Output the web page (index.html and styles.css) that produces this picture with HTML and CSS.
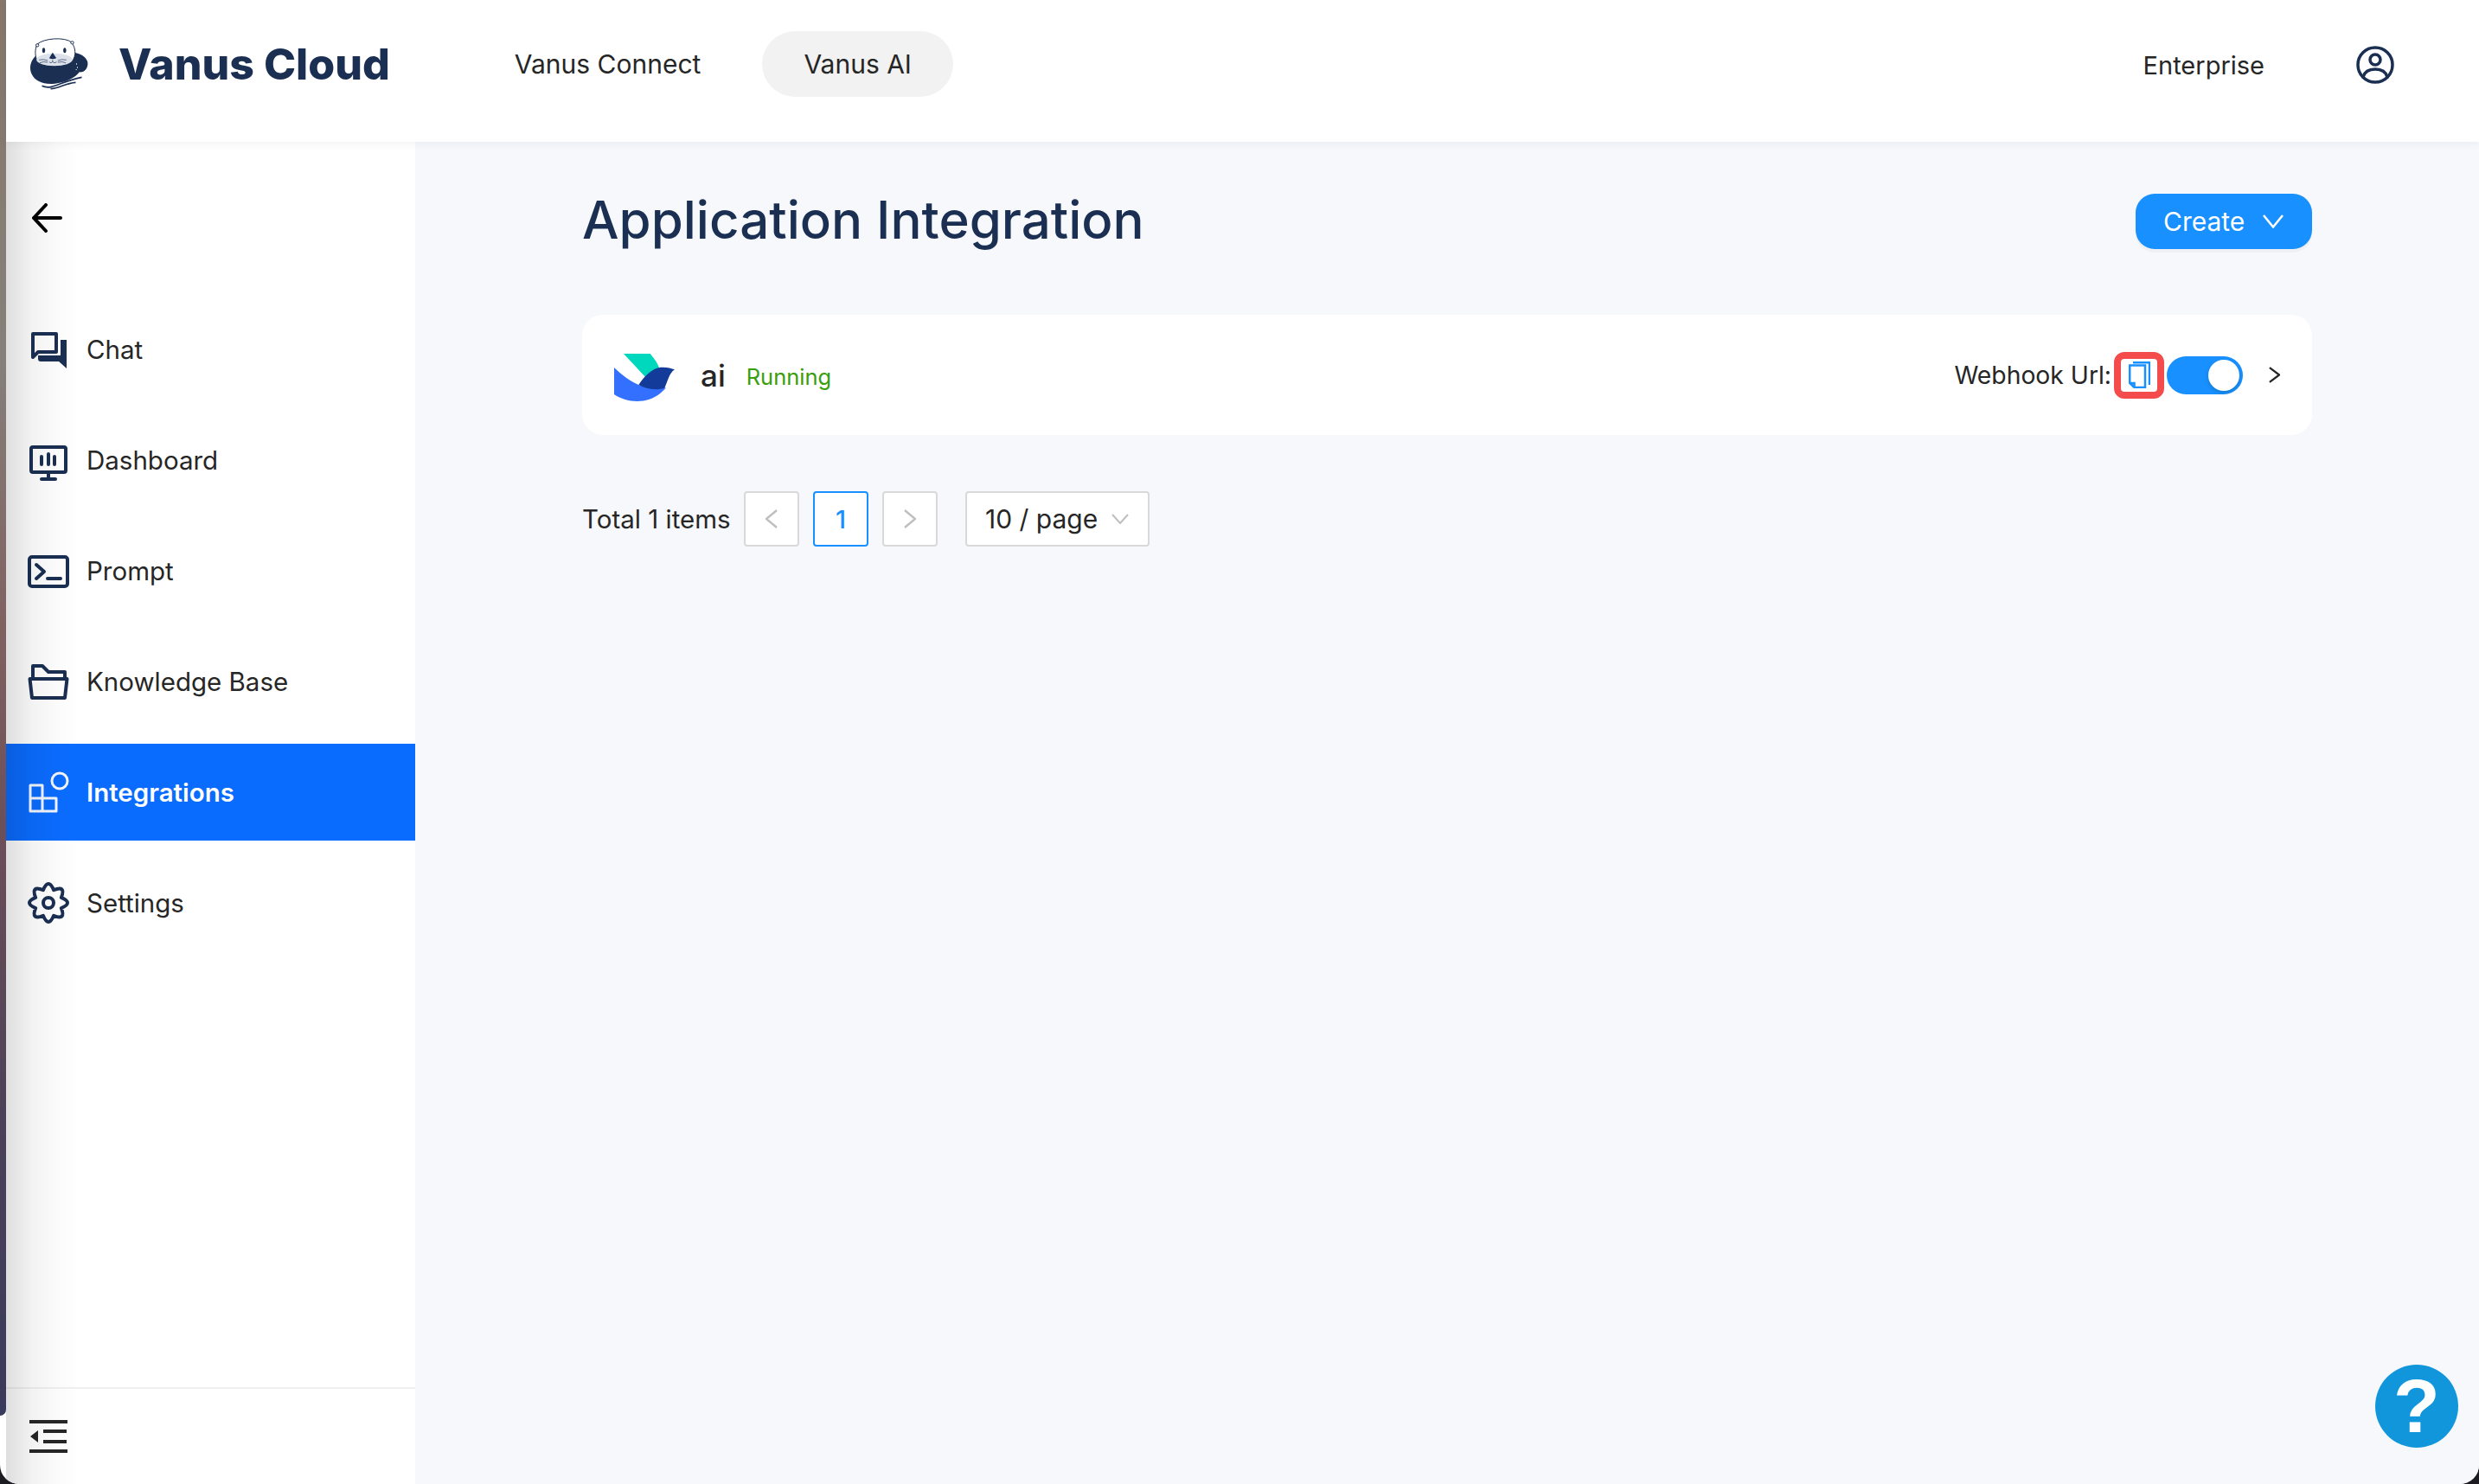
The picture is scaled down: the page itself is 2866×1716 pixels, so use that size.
FILE: index.html
```html
<!DOCTYPE html>
<html lang="en">
<head>
    <meta charset="UTF-8">
    <title>Vanus Cloud</title>
    <link rel="stylesheet" href="styles.css">
</head>
<body>
<div class="window">
    <div class="strip"></div>
    <div class="app">
        <header class="topbar">
            <svg class="otter" viewBox="105 70 200 180">
                <path class="navy" d="M125 130C103 150 100 178 110 196C122 220 150 232 190 228C225 226 262 207 275 188C295 190 307 170 303 152C298 135 280 125 258 120Z"/>
                <path class="otter-face" d="M128 92C150 70 225 65 248 85C262 105 265 130 250 150C225 170 150 172 130 150C120 135 120 110 128 92Z"/>
                <circle class="otter-face" cx="129" cy="95" r="5"/>
                <circle class="otter-face" cx="250" cy="86" r="5"/>
                <ellipse class="otter-muzzle" cx="188" cy="145" rx="62" ry="22"/>
                <ellipse class="navy" cx="151" cy="113" rx="5" ry="9"/>
                <ellipse class="navy" cx="224" cy="113" rx="5" ry="9"/>
                <path class="navy" d="M182 120L195 140Q182 146 170 140Z"/>
                <path class="otter-line" d="M182 146V152M135 146Q150 142 165 148M137 156Q150 150 165 154M230 146Q215 142 200 148M228 156Q215 150 200 154M170 153Q177 160 182 152Q188 160 196 153"/>
                <path class="otter-line white" d="M265 158v4M268 170v4M264 178v3"/>
                <path class="otter-wave" d="M145 236C180 252 205 222 283 206M175 246C205 246 225 226 262 224"/>
            </svg>
            <span class="brand">Vanus Cloud</span>
            <nav class="topnav">
                <a class="topnav-item">Vanus Connect</a>
                <a class="topnav-item on">Vanus AI</a>
            </nav>
            <a class="enterprise">Enterprise</a>
            <svg class="user" viewBox="0 0 44 44">
                <circle class="ico thin" cx="22" cy="22" r="20"/>
                <circle class="ico thin" cx="22" cy="16" r="6"/>
                <path class="ico thin" d="M8 36C10 29 15 27 22 27S34 29 36 36"/>
            </svg>
        </header>
        <div class="body">
            <aside class="side">
                <div class="back">
                    <svg class="back-arrow" viewBox="0 0 36 34"><path d="M34 17H3M17 2L3 17L17 32"/></svg>
                </div>
                <ul class="menu">
                    <li class="menu-item">
                        <svg class="icon" viewBox="0 0 48 48">
                            <path class="ico" d="M6 33V6H33V27H12Z"/>
                            <path class="navy" d="M38 13H45V46L36 38H15A3 3 0 0 1 12 35V31H38Z"/>
                        </svg>
                        <span>Chat</span>
                    </li>
                    <li class="menu-item">
                        <svg class="icon" viewBox="0 0 48 48">
                            <rect class="ico" x="4" y="9" width="40" height="29" rx="2"/>
                            <path class="ico" d="M24 38V46M16 46H32M16 20V29M24 17V29M31 20V29"/>
                        </svg>
                        <span>Dashboard</span>
                    </li>
                    <li class="menu-item">
                        <svg class="icon" viewBox="0 0 48 48">
                            <rect class="ico" x="2" y="8" width="44" height="34" rx="3"/>
                            <path class="ico" d="M10 17L19 25L10 33M23 33H38"/>
                        </svg>
                        <span>Prompt</span>
                    </li>
                    <li class="menu-item">
                        <svg class="icon" viewBox="0 0 48 48">
                            <path class="ico" d="M2.500 21H45.500L43 43H5Z"/>
                            <path class="ico" d="M6 21V6H17L24 13H43V21"/>
                        </svg>
                        <span>Knowledge Base</span>
                    </li>
                    <li class="menu-item active">
                        <svg class="icon" viewBox="0 0 48 48">
                            <circle class="ico-w" cx="37" cy="11" r="9"/>
                            <path class="ico-w" d="M3 16H17V46H3ZM3 31H33V46H17"/>
                        </svg>
                        <span>Integrations</span>
                    </li>
                    <li class="menu-item">
                        <svg class="icon" viewBox="0 0 48 48">
                            <path class="ico" d="M38.800 17.900Q53.200 24 38.800 30.100Q44.600 44.600 30.100 38.800Q24 53.200 17.900 38.800Q3.400 44.600 9.200 30.100Q-5.200 24 9.200 17.900Q3.400 3.400 17.900 9.200Q24 -5.200 30.100 9.200Q44.600 3.400 38.800 17.900Z"/>
                            <circle class="ico" cx="24" cy="24" r="6"/>
                        </svg>
                        <span>Settings</span>
                    </li>
                </ul>
                <div class="side-foot">
                    <svg class="fold" viewBox="0 0 44 38">
                        <path class="dark" d="M0 0H44V4H0ZM16 11H43V15H16ZM16 23H43V27H16ZM0 34H44V38H0ZM10 12V26L1 19Z"/>
                    </svg>
                </div>
            </aside>
            <main class="main">
                <div class="head-row">
                    <h1 class="title">Application Integration</h1>
                    <button class="create">Create
                        <svg class="create-arrow" viewBox="0 0 24 16"><path d="M1 1L12 14.500L23 1"/></svg>
                    </button>
                </div>
                <section class="card">
                    <svg class="bird" viewBox="150 177 210 165">
                        <path class="bird-teal" d="M183 177H275C290 195 302 212 308 230L262 262Z"/>
                        <path class="bird-blue" d="M150 225C175 250 205 272 235 285C265 298 300 300 330 295C300 330 265 342 230 342C200 342 170 332 150 318Z"/>
                        <path class="bird-dark" d="M235 285C255 255 285 222 320 224C335 224 350 228 360 232C340 245 335 275 325 296C295 305 260 300 235 285Z"/>
                    </svg>
                    <span class="app-name">ai</span>
                    <span class="status">Running</span>
                    <span class="webhook">Webhook Url:</span>
                    <span class="copy-box">
                        <svg class="copy" viewBox="0 0 25 31">
                            <path d="M1.200 4.500H19V30H6.500L1.200 25ZM1.200 25H6.500V30"/>
                            <path d="M5 1.200H24V27"/>
                        </svg>
                    </span>
                    <span class="switch"><i class="knob"></i></span>
                    <svg class="more" viewBox="0 0 14 20"><path d="M1 1L13 10L1 19"/></svg>
                </section>
                <div class="pager">
                    <span class="total">Total 1 items</span>
                    <span class="page">
                        <svg class="page-arrow" viewBox="0 0 14 22"><path d="M13 1L1 11L13 21"/></svg>
                    </span>
                    <span class="page current">1</span>
                    <span class="page">
                        <svg class="page-arrow" viewBox="0 0 14 22"><path d="M1 1L13 11L1 21"/></svg>
                    </span>
                    <span class="size">10 / page
                        <svg class="size-arrow" viewBox="0 0 20 12"><path d="M1 1L10 11L19 1"/></svg>
                    </span>
                </div>
            </main>
        </div>
    </div>
    <div class="edge-shade"></div>
    <div class="help">?</div>
</div>
</body>
</html>
```

FILE: styles.css
```css
*{
    margin: 0;padding: 0;
    box-sizing: border-box;
}
html,body{
    height: 100%;
    overflow: hidden;
    background: #1c1c22;
}
ul,li{list-style: none}
body{
    font-family: Inter, "Noto Sans", sans-serif;
    font-size: 29px;
    color: #262626;
}
.window{
    position: relative;
    display: flex;
    height: 1716px;
    background: #fff;
    border-radius: 0 0 22px 22px;
    overflow: hidden;
}
.strip{
    flex: none;
    width: 7px;
    height: 1637px;
    border-radius: 0 0 7px 0;
    background: linear-gradient(#87776a 0,#85807a 25%,#80605f 45%,#6a4d58 60%,#4a4058 80%,#3a3a5c 100%);
}
.app{
    flex: 1;
    display: flex;
    flex-direction: column;
    min-width: 0;
}
/* soft shadow of the neighbouring window */
.edge-shade{
    position: absolute;
    left: 7px;
    top: 0;
    bottom: 0;
    width: 85px;
    background: linear-gradient(90deg,rgba(0,0,0,.13),rgba(0,0,0,.05) 35%,rgba(0,0,0,.015) 70%,rgba(0,0,0,0));
    pointer-events: none;
}

.topbar{
    flex: none;
    position: relative;
    z-index: 2;
    display: flex;
    align-items: center;
    height: 164px;
    padding: 0 98px 16px 28px;
    background: #fff;
    box-shadow: 0 2px 10px rgba(20,30,60,.06);
}
.otter{
    width: 67px;
    height: 60px;
}
.navy{fill: #1a2f52}
.dark{fill: #262626}
.otter-face{
    fill: #fff;
    stroke: #1a2f52;
    stroke-width: 3;
}
.otter-muzzle{fill: #dde2ea}
.otter-line{
    fill: none;
    stroke: #1a2f52;
    stroke-width: 2;
}
.otter-line.white{stroke: #fff;stroke-width: 3}
.otter-wave{
    fill: none;
    stroke: #1a2f52;
    stroke-width: 5;
}
.brand{
    margin-left: 35px;
    font-size: 50px;
    font-weight: 800;
    color: #1a2f52;
}
.topnav{
    display: flex;
    align-items: center;
    gap: 23px;
    margin-left: 96px;
    font-size: 30px;
}
.topnav-item{
    height: 76px;
    line-height: 76px;
    padding: 0 48px;
    border-radius: 38px;
}
.topnav-item.on{background: #f2f2f2}
.enterprise{
    margin-left: auto;
    margin-top: 2px;
}
.user{
    width: 44px;
    height: 44px;
    margin-top: 2px;
    margin-left: 106px;
}
.ico{
    fill: none;
    stroke: #1a2f52;
    stroke-width: 4;
    stroke-linecap: round;
    stroke-linejoin: round;
}
.ico.thin{stroke-width: 3.500}
.ico-w{
    fill: none;
    stroke: #f2f5fa;
    stroke-width: 3;
    stroke-linejoin: round;
}

.body{
    flex: 1;
    display: flex;
    min-height: 0;
}
.side{
    flex: none;
    display: flex;
    flex-direction: column;
    width: 473px;
    background: #fff;
}
.back{
    display: flex;
    align-items: center;
    height: 176px;
    margin-bottom: 8px;
    padding-left: 29px;
}
.back-arrow{width: 36px;height: 34px}
.back-arrow path{
    fill: none;
    stroke: #000;
    stroke-width: 4;
    stroke-linecap: round;
    stroke-linejoin: round;
}
.menu{
    display: flex;
    flex-direction: column;
    gap: 16px;
}
.menu-item{
    display: flex;
    align-items: center;
    gap: 20px;
    height: 112px;
    padding-left: 25px;
    font-size: 29.500px;
}
.icon{
    flex: none;
    width: 48px;
    height: 48px;
    overflow: visible;
}
.menu-item.active{
    background: #0a6cff;
    color: #fff;
    font-weight: 600;
}
.side-foot{
    display: flex;
    align-items: center;
    height: 112px;
    margin-top: auto;
    padding-left: 27px;
    border-top: 2px solid #f0f0f0;
}
.fold{width: 44px;height: 38px}

.main{
    flex: 1;
    min-width: 0;
    padding: 60px 193px 0 193px;
    background: #f7f8fc;
}
.head-row{
    display: flex;
    align-items: center;
    justify-content: space-between;
    height: 64px;
}
.title{
    padding-bottom: 4px;
    font-size: 60px;
    font-weight: 500;
    color: #1a2f52;
}
.create{
    display: flex;
    align-items: center;
    gap: 21px;
    width: 204px;
    height: 64px;
    padding-left: 32px;
    border: 0;
    border-radius: 22px;
    background: #1890ff;
    color: #fff;
    font: inherit;
    font-size: 30px;
    box-shadow: 0 4px 0 rgba(0,0,0,.03);
}
.create-arrow{width: 24px;height: 16px}
.create-arrow path{
    fill: none;
    stroke: #fff;
    stroke-width: 2.500;
}
.card{
    display: flex;
    align-items: center;
    height: 139px;
    margin-top: 76px;
    padding: 0 36px 0 37px;
    background: #fff;
    border-radius: 24px;
}
.bird{
    width: 70px;
    height: 55px;
    margin-top: 6px;
}
.bird-teal{fill: #00d8bd}
.bird-blue{fill: #3370ff}
.bird-dark{fill: #133c9a}
.app-name{
    margin-left: 30px;
    font-size: 35px;
    font-weight: 500;
}
.status{
    margin-left: 24px;
    padding-top: 4px;
    font-size: 25.500px;
    color: #389e0d;
}
.webhook{
    margin-left: auto;
    font-size: 28.300px;
}
.copy-box{
    display: flex;
    align-items: center;
    justify-content: center;
    width: 58px;
    height: 54px;
    margin-left: 3px;
    border: 8px solid #f44c4c;
    border-radius: 12px;
}
.copy{
    flex: none;
    width: 25px;
    height: 31px;
}
.copy path{
    fill: none;
    stroke: #1890ff;
    stroke-width: 2.500;
}
.switch{
    display: flex;
    align-items: center;
    justify-content: flex-end;
    width: 88px;
    height: 44px;
    margin-left: 3px;
    padding-right: 4px;
    background: #1890ff;
    border-radius: 22px;
}
.knob{
    width: 36px;
    height: 36px;
    border-radius: 50%;
    background: #fff;
    box-shadow: 0 2px 4px rgba(0,35,11,.2);
}
.more{
    width: 13px;
    height: 19px;
    margin-left: 30px;
    margin-right: 1px;
}
.more path{
    fill: none;
    stroke: #262626;
    stroke-width: 2.500;
}
.pager{
    display: flex;
    align-items: center;
    height: 64px;
    margin-top: 65px;
}
.total{
    width: 187px;
    white-space: nowrap;
    font-size: 29.500px;
}
.page{
    display: flex;
    align-items: center;
    justify-content: center;
    width: 64px;
    height: 64px;
    margin-right: 16px;
    background: #fff;
    border: 2px solid #d9d9d9;
    border-radius: 4px;
}
.page.current{
    border-color: #1890ff;
    color: #1890ff;
    font-weight: 500;
}
.page-arrow{width: 14px;height: 22px}
.page-arrow path{
    fill: none;
    stroke: #bfbfbf;
    stroke-width: 2.500;
}
.size{
    display: flex;
    align-items: center;
    justify-content: space-between;
    width: 213px;
    height: 64px;
    margin-left: 16px;
    padding: 0 22px 0 21px;
    background: #fff;
    border: 2px solid #d9d9d9;
    border-radius: 4px;
    font-size: 30px;
}
.size-arrow{width: 20px;height: 12px}
.size-arrow path{
    fill: none;
    stroke: #bfbfbf;
    stroke-width: 2;
}
.help{
    position: absolute;
    right: 24px;
    bottom: 42px;
    width: 96px;
    height: 96px;
    border-radius: 50%;
    background: #1296db;
    color: #fff;
    font-family: "Liberation Sans", sans-serif;
    font-size: 88px;
    font-weight: 700;
    line-height: 96px;
    text-align: center;
}
```
